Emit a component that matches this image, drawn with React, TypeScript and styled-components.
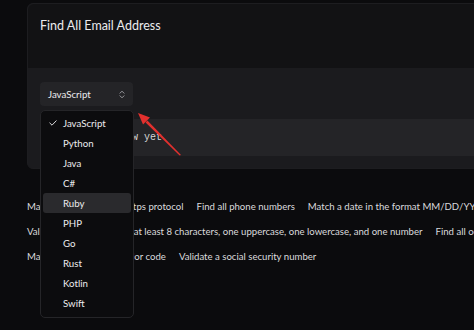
import React from "react";
import styled, { createGlobalStyle } from "styled-components";

const GlobalStyle = createGlobalStyle`
  html, body { margin: 0; padding: 0; background: #0b0b0d; overflow: hidden; }
  body { font-family: Lato, "Noto Sans", "Liberation Sans", sans-serif; }
  * { box-sizing: border-box; }
`;

const Page = styled.div`
  position: relative;
  width: 474px;
  height: 330px;
  padding: 3px 0 0 27px;
  overflow: hidden;
  background: #0b0b0d;
`;

const Panel = styled.div`
  width: 470px;
  border: 1px solid #1d1d20;
  border-radius: 6px;
  background: #1b1b1e;
`;

const Header = styled.div`
  height: 64px;
  padding: 13px 12px;
  background: #121214;
  border-radius: 6px 6px 0 0;
`;

const Title = styled.h1`
  margin: 0;
  font-size: 12.5px;
  font-weight: 400;
  line-height: 18px;
  color: #ececee;
`;

const Body = styled.div`
  padding: 14px 12px 12px;
  border-radius: 0 0 6px 6px;
`;

const SelectWrap = styled.div`
  position: relative;
  width: 93px;
`;

const SelectButton = styled.div`
  height: 24px;
  padding: 0 8px;
  border-radius: 4px;
  background: #242427;
  display: flex;
  align-items: center;
  justify-content: space-between;
  font-size: 9.7px;
  color: #ececee;
`;

const Dropdown = styled.div`
  position: absolute;
  top: 28px;
  left: 0;
  width: 94px;
  padding: 2px 2px 4px;
  background: #0c0c0e;
  border: 1px solid #252528;
  border-radius: 5px;
  z-index: 5;
  display: flex;
  flex-direction: column;
`;

const Option = styled.div<{ $active?: boolean }>`
  position: relative;
  height: 20px;
  padding-left: 20px;
  display: flex;
  align-items: center;
  border-radius: 3px;
  font-size: 9.7px;
  color: #ececee;
  background: ${(p) => (p.$active ? "#2a2a2d" : "transparent")};
`;

const Check = styled.svg`
  position: absolute;
  left: 6px;
  top: 7px;
`;

const CodeBox = styled.div`
  margin-top: 13px;
  height: 37px;
  padding-left: 8px;
  display: flex;
  align-items: center;
  background: #242427;
  border-radius: 3px;
  font-family: "Liberation Mono", "DejaVu Sans Mono", monospace;
  font-size: 10px;
  color: #d6d6d8;
`;

const Chips = styled.div`
  margin-top: 28px;
  width: 600px;
  display: flex;
  flex-wrap: wrap;
  column-gap: 13px;
  row-gap: 5px;
`;

const Chip = styled.span`
  height: 20px;
  line-height: 20px;
  font-size: 9.6px;
  color: #dadadc;
  white-space: nowrap;
`;

const Overlay = styled.svg`
  position: absolute;
  left: 0;
  top: 0;
  pointer-events: none;
  z-index: 10;
`;

const languages = ["JavaScript", "Python", "Java", "C#", "Ruby", "PHP", "Go", "Rust", "Kotlin", "Swift"];

const examples = [
  "Match a URL using the https protocol",
  "Find all phone numbers",
  "Match a date in the format MM/DD/YYYY",
  "Validate a password with at least 8 characters, one uppercase, one lowercase, and one number",
  "Find all occurrences of a word",
  "Match a valid CSS hex color code",
  "Validate a social security number",
];

export default function App() {
  return (
    <>
      <GlobalStyle />
      <Page>
        <Panel>
          <Header>
            <Title>Find All Email Address</Title>
          </Header>
          <Body>
            <SelectWrap>
              <SelectButton>
                <span>JavaScript</span>
                <svg width="6" height="9" viewBox="0 0 6 9" fill="none" stroke="#9a9a9e" strokeWidth="1" strokeLinecap="round" strokeLinejoin="round">
                  <polyline points="1,3.2 3,1.2 5,3.2" />
                  <polyline points="1,5.8 3,7.8 5,5.8" />
                </svg>
              </SelectButton>
              <Dropdown>
                {languages.map((l, i) => (
                  <Option key={l} $active={l === "Ruby"}>
                    {i === 0 && (
                      <Check width="8" height="6" viewBox="0 0 8 6" fill="none" stroke="#d8d8da" strokeWidth="1" strokeLinecap="round" strokeLinejoin="round">
                        <polyline points="0.8,3 3,5.2 7.2,0.8" />
                      </Check>
                    )}
                    {l}
                  </Option>
                ))}
              </Dropdown>
            </SelectWrap>
            <CodeBox>Nothing to show yet</CodeBox>
          </Body>
        </Panel>
        <Chips>
          {examples.map((e) => (
            <Chip key={e}>{e}</Chip>
          ))}
        </Chips>
        <Overlay width="474" height="330" viewBox="0 0 474 330">
          <polygon points="147.4,120.6 181,155 179.6,155.6 145.6,122.4" fill="#e2302e" />
          <polygon points="138,113 150,117.6 143,124.6" fill="#e2302e" />
        </Overlay>
      </Page>
    </>
  );
}
